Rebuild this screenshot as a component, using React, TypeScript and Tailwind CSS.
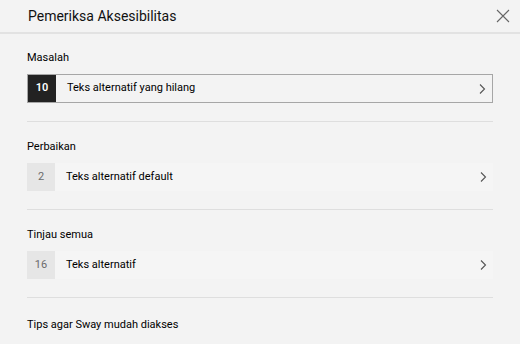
import React from "react";

function Chevron() {
  return (
    <svg width="8" height="12" viewBox="0 0 8 12" className="text-[#555]">
      <path d="M2 1.5 L6.5 6 L2 10.5" fill="none" stroke="currentColor" strokeWidth="1.1" />
    </svg>
  );
}

function Row({ count, label, dark }: { count: number; label: string; dark?: boolean }) {
  return (
    <div
      className={
        dark
          ? "flex h-[29px] items-stretch border border-[#a6a6a6] bg-[#f3f3f3]"
          : "flex h-[28px] items-stretch bg-[#f5f5f5]"
      }
    >
      <div
        className={
          dark
            ? "flex w-[28px] items-center justify-center bg-[#222] text-[11px] font-semibold text-white"
            : "flex w-[28px] items-center justify-center bg-[#e6e6e6] text-[11px] text-[#6b6b6b]"
        }
      >
        {count}
      </div>
      <div className="flex flex-1 items-center pl-[11px] text-[11px] text-black">{label}</div>
      <div className="flex items-center pr-[6px]">
        <Chevron />
      </div>
    </div>
  );
}

function Section({ title, children }: { title: string; children: React.ReactNode }) {
  return (
    <div className="border-b border-[#dedede] pb-[18px]">
      <div className="mb-[9px] h-[14px] text-[11px] leading-[14px] text-black">{title}</div>
      {children}
    </div>
  );
}

export default function App() {
  return (
    <div
      className="h-[344px] w-[520px] overflow-hidden bg-[#f3f3f3]"
      style={{ fontFamily: "Roboto, 'Liberation Sans', sans-serif" }}
    >
      <div className="flex h-[34px] items-center justify-between border-b-2 border-[#e2e2e2] pl-[28px] pr-[10px]">
        <span className="text-[14px] text-[#111]">Pemeriksa Aksesibilitas</span>
        <svg width="14" height="14" viewBox="0 0 14 14">
          <path d="M1 1 L13 13 M13 1 L1 13" stroke="#666" strokeWidth="1.1" />
        </svg>
      </div>
      <div className="flex flex-col gap-[18px] px-[27px] pt-[17px]">
        <Section title="Masalah">
          <Row count={10} label="Teks alternatif yang hilang" dark />
        </Section>
        <Section title="Perbaikan">
          <Row count={2} label="Teks alternatif default" />
        </Section>
        <Section title="Tinjau semua">
          <Row count={16} label="Teks alternatif" />
        </Section>
        <div className="pt-[2px] text-[11px] leading-[14px] text-black">Tips agar Sway mudah diakses</div>
      </div>
    </div>
  );
}
